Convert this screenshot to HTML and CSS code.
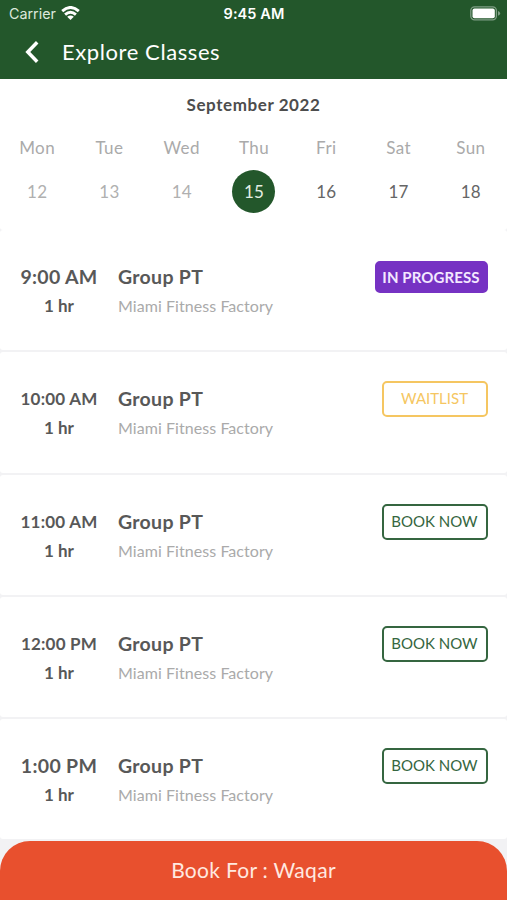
FILE: index.html
```html
<!DOCTYPE html>
<html lang="en">
<head>
<meta charset="utf-8">
<title>Explore Classes</title>
<link rel="stylesheet" href="styles.css">
</head>
<body>
<header class="header">
  <div class="status">
    <div class="carrier"><span class="carrier-name">Carrier</span>
      <svg class="wifi" width="19" height="14" viewBox="0 0 19 14" fill="none" stroke="#fff" stroke-width="2.9"><path d="M1.2 5.1Q9.5-2.2 17.8 5.1M4.1 8.6Q9.5 3.9 14.9 8.6"/><path d="M6.2 10.8Q9.5 8 12.8 10.8L9.5 14Z" fill="#fff" stroke="none"/></svg>
    </div>
    <div class="clock">9:45 AM</div>
    <svg class="battery" width="31" height="15" viewBox="0 0 31 15"><rect x=".8" y=".8" width="25.6" height="13" rx="3.8" fill="none" stroke="#7f9e85" stroke-width="1.3"/><rect x="2.5" y="2.5" width="22.3" height="9.7" rx="2" fill="#fff"/><path d="M28 5Q30.2 6 30.2 7.4T28 9.8Z" fill="#7f9e85"/></svg>
  </div>
  <div class="nav">
    <svg class="back" width="14" height="22" viewBox="0 0 14 22" fill="none" stroke="#fff" stroke-width="3.5"><path d="M12.2 1.3L2.8 11L12.2 20.7"/></svg>
    <h1 class="title">Explore Classes</h1>
  </div>
</header>
<section class="calendar">
  <h2 class="month">September 2022</h2>
  <div class="week">
    <div class="day"><span class="name">Mon</span><span class="num past">12</span></div>
    <div class="day"><span class="name">Tue</span><span class="num past">13</span></div>
    <div class="day"><span class="name">Wed</span><span class="num past">14</span></div>
    <div class="day"><span class="name">Thu</span><span class="num today">15</span></div>
    <div class="day"><span class="name">Fri</span><span class="num">16</span></div>
    <div class="day"><span class="name">Sat</span><span class="num">17</span></div>
    <div class="day"><span class="name">Sun</span><span class="num">18</span></div>
  </div>
</section>
<main class="classes">
  <article class="card"><div class="when"><span class="time">9:00 AM</span><span class="length">1 hr</span></div><div class="what"><span class="class-name">Group PT</span><span class="place">Miami Fitness Factory</span></div><span class="tag progress">IN PROGRESS</span></article>
  <article class="card"><div class="when"><span class="time small">10:00 AM</span><span class="length">1 hr</span></div><div class="what"><span class="class-name">Group PT</span><span class="place">Miami Fitness Factory</span></div><span class="tag waitlist">WAITLIST</span></article>
  <article class="card"><div class="when"><span class="time small">11:00 AM</span><span class="length">1 hr</span></div><div class="what"><span class="class-name">Group PT</span><span class="place">Miami Fitness Factory</span></div><span class="tag book">BOOK NOW</span></article>
  <article class="card"><div class="when"><span class="time small">12:00 PM</span><span class="length">1 hr</span></div><div class="what"><span class="class-name">Group PT</span><span class="place">Miami Fitness Factory</span></div><span class="tag book">BOOK NOW</span></article>
  <article class="card"><div class="when"><span class="time">1:00 PM</span><span class="length">1 hr</span></div><div class="what"><span class="class-name">Group PT</span><span class="place">Miami Fitness Factory</span></div><span class="tag book">BOOK NOW</span></article>
</main>
<footer class="footer">Book For : Waqar</footer>
</body>
</html>
```
FILE: styles.css
```css
* { box-sizing: border-box; }
body { margin: 0; height: 900px; overflow: hidden; display: flex; flex-direction: column; background: #f2f2f4; color: #585858; font-family: Lato, sans-serif; }
h1, h2 { margin: 0; }
.header { height: 79px; flex: none; background: #23572b; color: #fff; }
.status { height: 27px; display: grid; grid-template-columns: 1fr auto 1fr; align-items: center; padding: 0 6px 0 9px; font-family: Inter, sans-serif; }
.carrier { display: flex; align-items: center; gap: 6px; font-size: 14.3px; color: #dce8dc; }
.wifi { margin: -2px 0 0 -1px; }
.clock { margin-left: -2px; font-size: 14.5px; font-weight: 600; letter-spacing: .1px; }
.battery { justify-self: end; }
.nav { display: flex; align-items: center; height: 50px; padding-left: 25px; }
.title { margin-left: 23px; font-size: 22px; line-height: 28px; font-weight: 400; letter-spacing: .58px; }
.calendar { height: 151px; flex: none; background: #fff; border-radius: 0 0 3px 3px; padding-top: 14px; }
.month { font-size: 17px; line-height: 24px; font-weight: 700; letter-spacing: .58px; text-align: center; color: #4d4d4d; }
.week { display: grid; grid-template-columns: repeat(7, 1fr); margin-top: 19px; padding-left: 1px; }
.day { display: flex; flex-direction: column; align-items: center; }
.name { font-size: 17px; line-height: 24px; letter-spacing: .4px; color: #aaa; }
.num { width: 43px; height: 43px; margin-top: 10px; border-radius: 50%; font-size: 17px; line-height: 43px; letter-spacing: .2px; text-align: center; color: #666; }
.past { color: #b0b0b0; }
.today { background: #23572b; color: #e3eee3; }
.classes { display: flex; flex-direction: column; gap: 2px; }
.card { height: 120.3px; flex: none; display: flex; align-items: center; background: #fff; border-radius: 3px; padding: 0 19.5px 0 10px; }
.when { width: 98px; display: flex; flex-direction: column; align-items: center; }
.time, .class-name { font-size: 19.5px; line-height: 31px; font-weight: 700; white-space: nowrap; letter-spacing: .3px; padding-top: 1px; }
.small { font-size: 17px; letter-spacing: .2px; }
.length { font-size: 17px; line-height: 28px; font-weight: 700; }
.what { flex: 1; padding-left: 10px; display: flex; flex-direction: column; }
.place { font-size: 16px; line-height: 28px; color: #aaa; letter-spacing: .06px; }
.tag { width: 106px; height: 36px; margin-top: -26px; border: 2px solid; border-radius: 5px; font-size: 15px; line-height: 31px; text-align: center; white-space: nowrap; }
.progress { width: 113px; height: 32px; line-height: 28px; border-color: #7632c3; background: #7632c3; color: #f3e8ff; font-weight: 700; letter-spacing: .1px; }
.waitlist { color: #f5c661; }
.book { color: #356640; }
.footer { position: absolute; left: 0; right: 0; bottom: 0; height: 59px; background: #e8502e; border-radius: 30px 30px 0 0; color: #ffe9e0; font-size: 21px; line-height: 58px; letter-spacing: .3px; text-align: center; }
```
